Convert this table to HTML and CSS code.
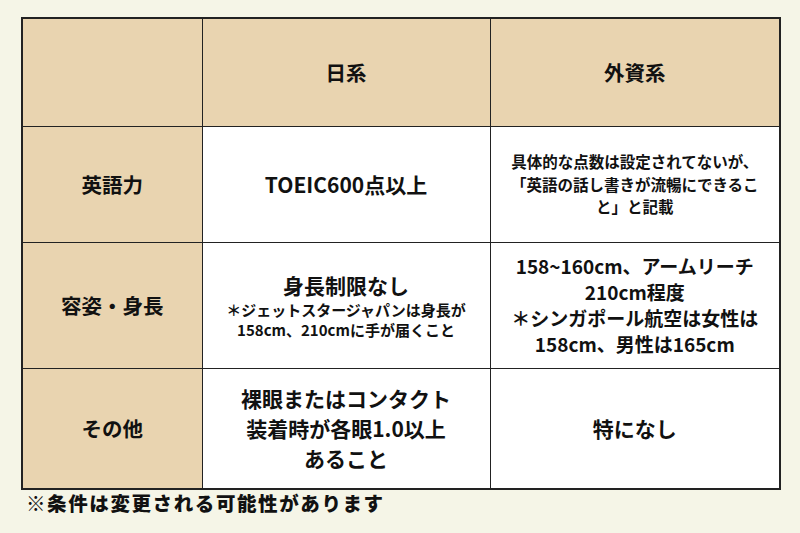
FILE: index.html
```html
<!DOCTYPE html>
<html lang="ja">
<head>
<meta charset="utf-8">
<link rel="stylesheet" href="styles.css">
</head>
<body>
<div class="page">
  <table class="cmp">
    <colgroup>
      <col class="c1">
      <col class="c2">
      <col class="c3">
    </colgroup>
    <tr class="r-head">
      <th class="lab"></th>
      <th class="lab">日系</th>
      <th class="lab">外資系</th>
    </tr>
    <tr class="r-eng">
      <th class="lab">英語力</th>
      <td class="big">TOEIC600点以上</td>
      <td class="small">具体的な点数は設定されてないが、<br>「英語の話し書きが流暢にできるこ<br>と」と記載</td>
    </tr>
    <tr class="r-body">
      <th class="lab">容姿・身長</th>
      <td><div class="big">身長制限なし</div><div class="small tight">＊ジェットスタージャパンは身長が<br>158cm、210cmに手が届くこと</div></td>
      <td class="mid">158~160cm、アームリーチ<br>210cm程度<br>＊シンガポール航空は女性は<br>158cm、男性は165cm</td>
    </tr>
    <tr class="r-other">
      <th class="lab">その他</th>
      <td class="big loose">裸眼またはコンタクト<br>装着時が各眼1.0以上<br>あること</td>
      <td class="big">特になし</td>
    </tr>
  </table>
  <p class="note">※条件は変更される可能性があります</p>
</div>
</body>
</html>
```
FILE: styles.css
```css
html, body {
  margin: 0;
  padding: 0;
  background: #f5f5e7;
}
body {
  font-family: "Noto Sans CJK JP", "Noto Sans", sans-serif;
  color: #111;
}
.page {
  padding: 17px 21px 0 21px;
  width: 758px;
}
.cmp {
  width: 758px;
  border-collapse: collapse;
  table-layout: fixed;
  border: 2px solid #222;
}
.c1 { width: 180px; }
.c2 { width: 288px; }
.c3 { width: 290px; }
.cmp th, .cmp td {
  border: 1.5px solid #222;
  text-align: center;
  vertical-align: middle;
  padding: 0 2px;
}
.cmp th {
  background: #e9d4b0;
}
.cmp td {
  background: #ffffff;
}
.r-head { height: 108px; }
.r-eng { height: 116px; }
.r-body { height: 126px; }
.r-other { height: 121px; }
.lab {
  font-size: 20.5px;
  font-weight: 700;
}
.big {
  font-size: 21px;
  font-weight: 700;
  line-height: 28px;
}
.loose {
  line-height: 30px;
}
.small {
  font-size: 15.5px;
  font-weight: 700;
  line-height: 22.5px;
}
.tight {
  font-size: 15px;
  line-height: 20px;
  margin-top: 1px;
}
.mid {
  font-size: 19px;
  font-weight: 700;
  line-height: 26px;
}
.note {
  margin: 0 0 0 5px;
  font-size: 19.5px;
  font-weight: 900;
  letter-spacing: 1.6px;
  line-height: 26px;
}
```
